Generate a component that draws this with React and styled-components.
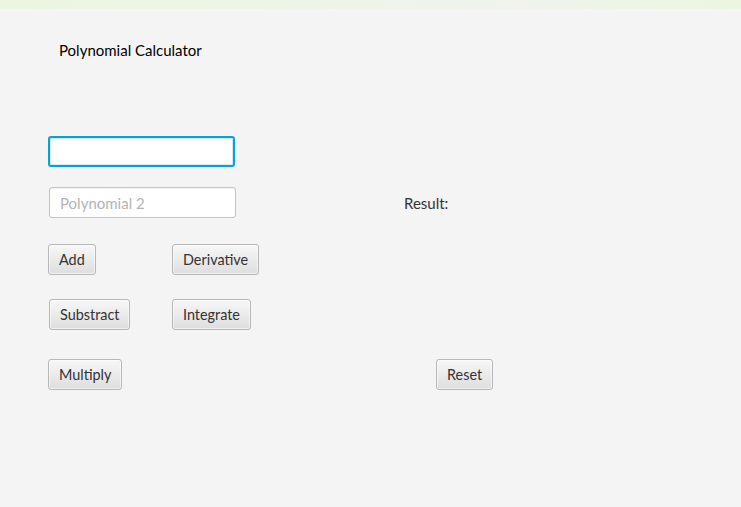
import React from "react";
import styled, { createGlobalStyle } from "styled-components";

const Global = createGlobalStyle`
  html, body { margin: 0; padding: 0; background: #f4f4f4; }
  body { font-family: "Lato", "Noto Sans", sans-serif; }
  * { box-sizing: border-box; }
`;

const Window = styled.div`
  width: 741px;
  height: 507px;
  background: #f4f4f4;
  display: flex;
  flex-direction: column;
  overflow: hidden;
`;

const TopStrip = styled.div`
  height: 9px;
  flex: none;
  background: linear-gradient(90deg, #eaf6e0 0%, #eff4e8 45%, #f1f3ec 70%, #eaf6e0 100%);
`;

const Content = styled.div`
  display: flex;
  flex-direction: column;
  padding-left: 48px;
`;

const Row = styled.div`
  display: flex;
  align-items: center;
  margin-top: ${(p) => p.$top}px;
`;

const ButtonRow = styled.div`
  display: grid;
  grid-template-columns: 124px 264px auto;
  justify-items: start;
  align-items: center;
  margin-top: ${(p) => p.$top}px;
`;

const Title = styled.div`
  font-size: 15px;
  line-height: 18px;
  color: #000;
  margin-left: ${(p) => p.$x || 0}px;
`;

const Field = styled.input`
  width: 187px;
  height: 31px;
  margin-left: ${(p) => p.$x || 0}px;
  padding: 0 10px;
  font: inherit;
  font-size: 15px;
  color: #333;
  border-radius: 3px;
  background: #fff;
  outline: none;
  border: ${(p) => (p.$focused ? "2px solid #0f9ed8" : "1px solid #c4c4c4")};
  box-shadow: ${(p) =>
    p.$focused
      ? "inset 0 0 0 1px #c8ecf8"
      : "inset 0 1px 2px rgba(0,0,0,0.06)"};
  &::placeholder { color: #b4b4b4; }
`;

const Label = styled.div`
  font-size: 15px;
  color: #333;
  margin-left: ${(p) => p.$x || 0}px;
`;

const Button = styled.button`
  height: 31px;
  padding: 0 10px;
  margin-left: ${(p) => p.$x || 0}px;
  grid-column: ${(p) => p.$col || "auto"};
  font: inherit;
  font-size: 14.4px;
  color: #333;
  border: 1px solid #b7b7b7;
  border-radius: 3px;
  background: linear-gradient(#f7f7f7, #dedede);
  box-shadow: inset 0 0 0 1px rgba(255, 255, 255, 0.55);
  cursor: pointer;
`;

export default function App() {
  return (
    <Window>
      <Global />
      <TopStrip />
      <Content>
        <Row $top={32}>
          <Title $x={11}>Polynomial Calculator</Title>
        </Row>
        <Row $top={77}>
          <Field $focused />
        </Row>
        <Row $top={20}>
          <Field $x={1} placeholder="Polynomial 2" />
          <Label $x={168}>Result:</Label>
        </Row>
        <ButtonRow $top={26}>
          <Button $col={1}>Add</Button>
          <Button $col={2}>Derivative</Button>
        </ButtonRow>
        <ButtonRow $top={24}>
          <Button $col={1} $x={1}>Substract</Button>
          <Button $col={2}>Integrate</Button>
        </ButtonRow>
        <ButtonRow $top={29}>
          <Button $col={1}>Multiply</Button>
          <Button $col={3}>Reset</Button>
        </ButtonRow>
      </Content>
    </Window>
  );
}
